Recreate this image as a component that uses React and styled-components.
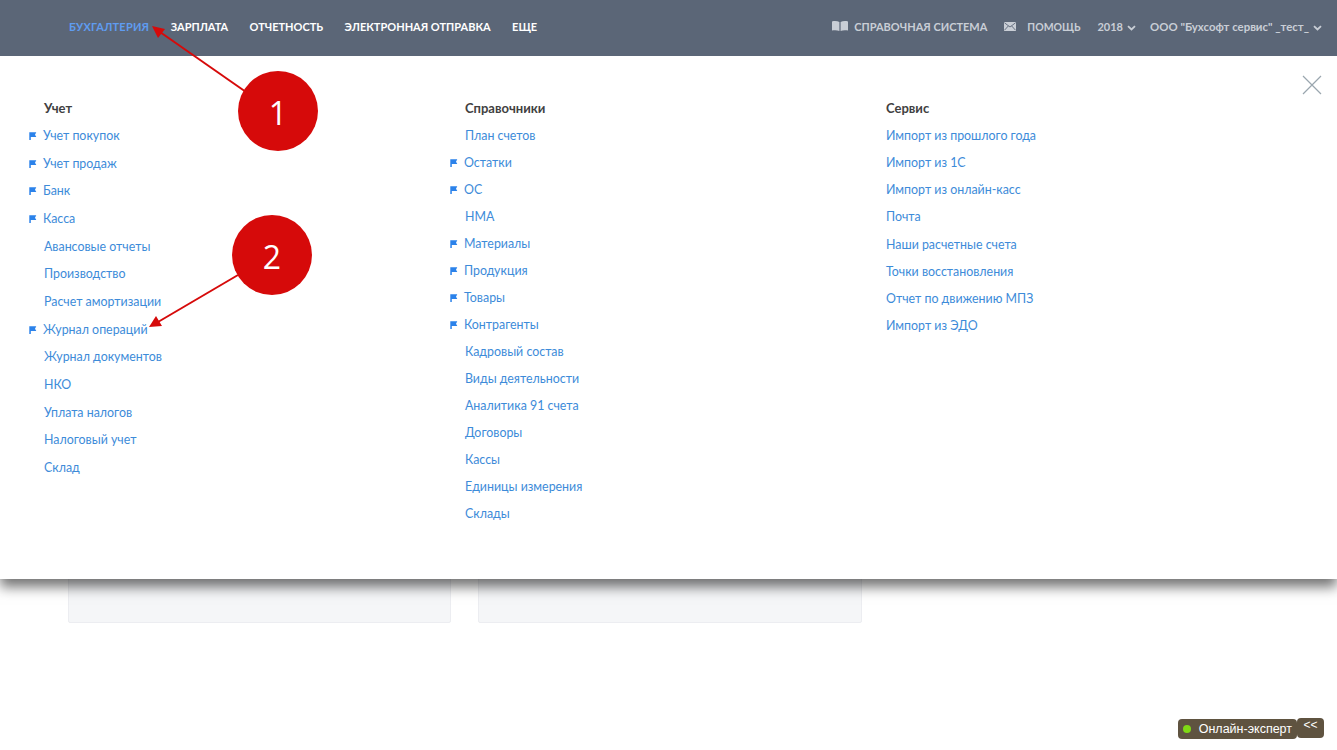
import React from "react";
import styled, { createGlobalStyle } from "styled-components";

const Global = createGlobalStyle`
  html, body { margin: 0; padding: 0; background: #fff; }
  body { font-family: Lato, Roboto, "Liberation Sans", sans-serif; }
`;

const Page = styled.div`
  position: relative;
  width: 1337px;
  height: 750px;
  overflow: hidden;
  background: #fff;
`;

const Header = styled.header`
  position: relative;
  z-index: 3;
  height: 56px;
  background: #5b6677;
  display: flex;
  align-items: center;
  justify-content: space-between;
  padding: 0 15px 3px 69px;
  box-sizing: border-box;
`;

const NavGroup = styled.nav`
  display: flex;
  align-items: center;
  gap: 21.4px;
`;

const NavItem = styled.a`
  font-size: 11px;
  font-weight: 700;
  line-height: 16px;
  letter-spacing: ${(p) => (p.$active ? "0.2px" : "0")};
  text-transform: uppercase;
  white-space: nowrap;
  color: ${(p) => (p.$active ? "#5f9cf0" : "#ffffff")};
`;

const Tools = styled.div`
  display: flex;
  align-items: center;
`;

const Tool = styled.span`
  display: inline-flex;
  align-items: center;
  gap: ${(p) => p.$gap || 6}px;
  margin-left: ${(p) => p.$ml || 0}px;
  font-size: ${(p) => p.$size || 11}px;
  font-weight: 700;
  line-height: 16px;
  white-space: nowrap;
  color: #c9ced6;
`;

const Content = styled.main`
  display: flex;
  gap: 27px;
  padding: 345px 0 0 68px;
`;

const Card = styled.section`
  width: 383px;
  height: 222px;
  box-sizing: border-box;
  background: #f5f6f8;
  border: 1px solid #ecedf1;
  border-radius: 2px;
  & + & {
    width: 384px;
  }
`;

const MenuPanel = styled.div`
  position: absolute;
  z-index: 2;
  top: 56px;
  left: 0;
  width: 1337px;
  height: 523px;
  box-sizing: border-box;
  background: #fff;
  box-shadow: 0 8px 12px rgba(0, 0, 0, 0.55);
  padding: 39px 0 0 29px;
  display: grid;
  grid-template-columns: 421px 421px 1fr;
`;

const Column = styled.div`
  display: flex;
  flex-direction: column;
`;

const ColumnTitle = styled.h3`
  margin: 0;
  height: 27px;
  padding-left: 15px;
  font-size: 13px;
  font-weight: 700;
  line-height: 27px;
  color: #414141;
`;

const Row = styled.a`
  display: flex;
  align-items: center;
  gap: 6px;
  height: ${(p) => p.$h}px;
  padding-left: ${(p) => (p.$flag ? 0 : 15)}px;
  font-size: 12.4px;
  line-height: 16px;
  white-space: nowrap;
  color: #3d8bd9;
`;

const CloseButton = styled.button`
  position: absolute;
  top: 19px;
  right: 15px;
  width: 20px;
  height: 20px;
  padding: 0;
  border: 0;
  background: none;
  display: block;
`;

const Badge = styled.div`
  position: absolute;
  z-index: 5;
  left: ${(p) => p.$x}px;
  top: ${(p) => p.$y}px;
  width: 80px;
  height: 80px;
  border-radius: 50%;
  background: #d60a0a;
  color: #fff;
  font-family: "Open Sans", sans-serif;
  font-size: 32px;
  line-height: 83px;
  text-align: center;
`;

const Arrows = styled.svg`
  position: absolute;
  z-index: 4;
  left: 0;
  top: 0;
  pointer-events: none;
`;

const Widget = styled.div`
  position: absolute;
  z-index: 6;
  right: 13px;
  bottom: 11px;
  display: flex;
  align-items: flex-start;
  font-family: "Liberation Sans", Arial, sans-serif;
  color: #fff;
`;

const WidgetLabel = styled.div`
  display: flex;
  align-items: center;
  gap: 8px;
  height: 20px;
  margin-top: 1px;
  padding: 0 5px;
  background: #5f5340;
  border-radius: 4px;
  font-size: 12.5px;
  white-space: nowrap;
`;

const Dot = styled.i`
  display: block;
  width: 8px;
  height: 8px;
  border-radius: 50%;
  background: #7fd914;
`;

const WidgetToggle = styled.div`
  width: 27px;
  height: 20px;
  background: #5f5340;
  border-radius: 4px;
  font-size: 12px;
  line-height: 14px;
  text-align: center;
`;

const ChevronMark = styled.svg`
  margin-top: 3px;
`;

const Flag = () => (
  <svg width="8" height="8" viewBox="0 0 8 8" aria-hidden="true">
    <path d="M0.3 0.3H7.3L6 2.7L7.3 5H1.8V8H0.3Z" fill="#2b82ea" />
  </svg>
);

const Chevron = () => (
  <ChevronMark width="9" height="6" viewBox="0 0 9 6" aria-hidden="true">
    <path d="M1 1.2L4.5 4.5L8 1.2" fill="none" stroke="#c9ced6" strokeWidth="1.8" />
  </ChevronMark>
);

const BookIcon = () => (
  <svg width="16" height="11" viewBox="0 0 16 11" aria-hidden="true">
    <path d="M0 0.5C2.5 -0.2 5.5 0 7.4 1V10C5.5 9.2 2.5 9 0 9.6Z" fill="#c9ced6" />
    <path d="M16 0.5C13.5 -0.2 10.5 0 8.6 1V10C10.5 9.2 13.5 9 16 9.6Z" fill="#c9ced6" />
  </svg>
);

const MailIcon = () => (
  <svg width="12" height="9" viewBox="0 0 12 9" aria-hidden="true">
    <rect width="12" height="9" rx="0.5" fill="#c9ced6" />
    <path d="M0.5 0.8L6 5L11.5 0.8M0.5 8.2L4.4 3.9M11.5 8.2L7.6 3.9" fill="none" stroke="#5b6677" strokeWidth="0.9" />
  </svg>
);

const columns = [
  {
    title: "Учет",
    h: 27.7,
    items: [
      ["Учет покупок", 1], ["Учет продаж", 1], ["Банк", 1], ["Касса", 1],
      ["Авансовые отчеты"], ["Производство"], ["Расчет амортизации"],
      ["Журнал операций", 1], ["Журнал документов"], ["НКО"],
      ["Уплата налогов"], ["Налоговый учет"], ["Склад"],
    ],
  },
  {
    title: "Справочники",
    h: 27,
    items: [
      ["План счетов"], ["Остатки", 1], ["ОС", 1], ["НМА"], ["Материалы", 1],
      ["Продукция", 1], ["Товары", 1], ["Контрагенты", 1], ["Кадровый состав"],
      ["Виды деятельности"], ["Аналитика 91 счета"], ["Договоры"], ["Кассы"],
      ["Единицы измерения"], ["Склады"],
    ],
  },
  {
    title: "Сервис",
    h: 27.25,
    items: [
      ["Импорт из прошлого года"], ["Импорт из 1С"], ["Импорт из онлайн-касс"],
      ["Почта"], ["Наши расчетные счета"], ["Точки восстановления"],
      ["Отчет по движению МПЗ"], ["Импорт из ЭДО"],
    ],
  },
];

export default function App() {
  return (
    <Page>
      <Global />
      <Header>
        <NavGroup>
          <NavItem $active>Бухгалтерия</NavItem>
          <NavItem>Зарплата</NavItem>
          <NavItem>Отчетность</NavItem>
          <NavItem>Электронная отправка</NavItem>
          <NavItem>Еще</NavItem>
        </NavGroup>
        <Tools>
          <Tool><BookIcon />СПРАВОЧНАЯ СИСТЕМА</Tool>
          <Tool $ml={17} $gap={11} $size={10.5}><MailIcon />ПОМОЩЬ</Tool>
          <Tool $ml={17} $gap={4}>2018<Chevron /></Tool>
          <Tool $ml={14} $gap={4} $size={11.4}>ООО "Бухсофт сервис" _тест_<Chevron /></Tool>
        </Tools>
      </Header>

      <Content>
        <Card />
        <Card />
      </Content>

      <MenuPanel>
        {columns.map((col) => (
          <Column key={col.title}>
            <ColumnTitle>{col.title}</ColumnTitle>
            {col.items.map(([label, flag]) => (
              <Row key={label} $h={col.h} $flag={flag}>
                {flag ? <Flag /> : null}
                {label}
              </Row>
            ))}
          </Column>
        ))}
        <CloseButton aria-label="Закрыть">
          <svg width="20" height="20" viewBox="0 0 20 20">
            <path d="M1 1L19 19M19 1L1 19" stroke="#9aa6ae" strokeWidth="1.2" fill="none" />
          </svg>
        </CloseButton>
      </MenuPanel>

      <Arrows width="1337" height="750" viewBox="0 0 1337 750">
        <path d="M246 92L160 32" stroke="#d60a0a" strokeWidth="2" fill="none" />
        <path d="M152 26L165 29L158 38Z" fill="#d60a0a" />
        <path d="M238 275L158 322" stroke="#d60a0a" strokeWidth="2" fill="none" />
        <path d="M149 327L156 316L162 326Z" fill="#d60a0a" />
      </Arrows>
      <Badge $x={238} $y={71}>1</Badge>
      <Badge $x={232} $y={215}>2</Badge>

      <Widget>
        <WidgetLabel><Dot />Онлайн-эксперт</WidgetLabel>
        <WidgetToggle>&lt;&lt;</WidgetToggle>
      </Widget>
    </Page>
  );
}
